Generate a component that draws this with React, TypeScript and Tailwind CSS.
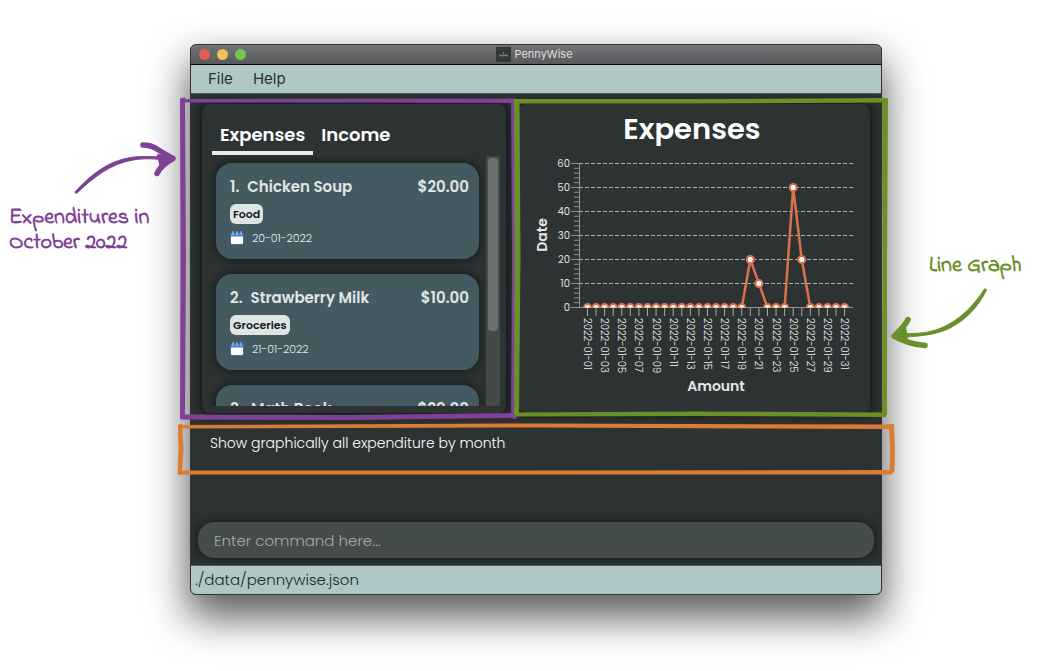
import React from "react";

type Expense = { id: number; name: string; amount: string; tag?: string; date?: string };

const expenses: Expense[] = [
  { id: 1, name: "Chicken Soup", amount: "$20.00", tag: "Food", date: "20-01-2022" },
  { id: 2, name: "Strawberry Milk", amount: "$10.00", tag: "Groceries", date: "21-01-2022" },
  { id: 3, name: "Math Book", amount: "$20.00" },
];

const daily: number[] = Array.from({ length: 31 }, (_, i) => {
  if (i === 19) return 20;
  if (i === 20) return 10;
  if (i === 24) return 50;
  if (i === 25) return 20;
  return 0;
});

function CalendarIcon() {
  return (
    <svg width="14" height="14" viewBox="0 0 14 14" aria-hidden="true">
      <rect x="0.5" y="1.800" width="13" height="11.700" rx="1.5" fill="#4a80d0" />
      <path d="M1 5.500h12v6.300a1.200 1.200 0 0 1-1.200 1.200H2.200A1.200 1.200 0 0 1 1 11.800z" fill="#fff" />
      <path d="M3 .8v2.600M7 .8v2.600M11 .8v2.600" stroke="#8fb8f2" strokeWidth="1.400" strokeLinecap="round" />
    </svg>
  );
}

function ExpenseCard({ item }: { item: Expense }) {
  return (
    <li className="h-24 shrink-0 rounded-2xl bg-[#455a60] pt-3 pr-2.5 pl-3.5 shadow-[0_0_8px_2px_rgba(0,0,0,0.45)]">
      <div className="flex gap-2 text-[15px] leading-[23px] font-semibold text-[#e0e7e7]">
        <span>{item.id}.</span>
        <span className="flex-1">{item.name}</span>
        <span>{item.amount}</span>
      </div>
      {item.tag && (
        <div className="mt-1.5 flex">
          <span className="rounded-md bg-[#dde6e5] px-[3px] text-[11px] leading-5 font-semibold text-[#151a1a]">
            {item.tag}
          </span>
        </div>
      )}
      {item.date && (
        <div className="mt-1.5 flex items-center gap-2 text-[11px] leading-4 font-light text-[#e6ebeb]">
          <CalendarIcon />
          <span>{item.date}</span>
        </div>
      )}
    </li>
  );
}

function ExpenseChart() {
  const x = (i: number) => 69.5 + i * 8.57;
  const y = (v: number) => 203.5 - v * 2.4;
  const points = daily.map((v, i) => `${x(i)},${y(v)}`).join(" ");
  return (
    <svg viewBox="0 0 352 308" className="block w-full" role="img" aria-label="Expenses line chart">
      <defs>
        <clipPath id="plot">
          <rect x="60" y="50" width="278" height="153.500" />
        </clipPath>
      </defs>
      <text x="174" y="35" textAnchor="middle" fontSize="29" fontWeight="600" fill="#fff">Expenses</text>
      {[0, 10, 20, 30, 40, 50, 60].map((v) => (
        <g key={v}>
          <text x="52" y={y(v) + 3.5} textAnchor="end" fontSize="10" fill="#dfe3e3">{v}</text>
          <path d={`M53 ${y(v)}h8`} stroke="#8f9494" />
          {v > 0 && <path d={`M61 ${y(v)}H336`} stroke="#a9adad" strokeDasharray="4 2" />}
        </g>
      ))}
      {Array.from({ length: 30 }, (_, i) => (
        <path key={i} d={`M56 ${y(i * 2)}h5`} stroke="#8f9494" />
      ))}
      <path d="M61.500 59V204M61 203.500H335" stroke="#8f9494" fill="none" />
      {daily.map((_, i) => (
        <path key={i} d={`M${x(i)} 204v8`} stroke="#a5a9a9" />
      ))}
      {daily.map((_, i) =>
        i % 2 === 0 ? (
          <text key={i} transform={`translate(${x(i) - 3.5} 214) rotate(90)`} fontSize="10" fontWeight="300" fill="#f0f3f3">
            {`2022-01-${String(i + 1).padStart(2, "0")}`}
          </text>
        ) : null,
      )}
      <g clipPath="url(#plot)">
        <polyline points={points} fill="none" stroke="#dc7150" strokeWidth="2.500" strokeLinejoin="round" />
        {daily.map((v, i) => (
          <circle key={i} cx={x(i)} cy={y(v)} r="3.500" fill="#fff" stroke="#dc7150" strokeWidth="2" />
        ))}
      </g>
      <text transform="translate(29 131) rotate(-90)" textAnchor="middle" fontSize="14" fontWeight="600" fill="#e4e8e8">Date</text>
      <text x="198" y="287" textAnchor="middle" fontSize="14" fontWeight="600" fill="#e4e8e8">Amount</text>
    </svg>
  );
}

export default function App() {
  return (
    <main className="grid min-h-screen grid-cols-[190px_minmax(0,1fr)_163px] items-start overflow-hidden bg-white font-['Poppins','Inter','Liberation_Sans',sans-serif]">
      <aside className="relative z-10 pt-[140px] pl-[9px] text-[#7f4196]">
        <svg width="170" height="60" viewBox="9 140 170 60" fill="currentColor" stroke="currentColor" strokeLinecap="round" strokeLinejoin="round" aria-hidden="true">
          <path d="M75 192C95 170 115 157 142 156.500L172 157V161C155 158 142 158.500 133 160C110 164 94 177 76.500 193.500Z" strokeWidth="1" />
          <path d="M143 145Q151 145 157 149T173 158.500Q161 165 157 173.500" fill="none" strokeWidth="5.500" />
          <path d="M158 155L174 159L161 168Z" strokeWidth="2" />
        </svg>
        <p className="mt-1.5 font-['Indie_Flower','Lato',sans-serif] text-[22px] leading-[25px] font-bold whitespace-nowrap">
          Expenditures in
          <br />
          October 2022
        </p>
      </aside>

      <section className="mt-11 rounded-md border border-[#303234] bg-[#2d3333] shadow-[0_20px_40px_2px_rgba(0,0,0,0.65)]">
        <header className="relative flex h-5 items-center justify-center gap-[3px] rounded-t-[5px] border-b border-black bg-linear-to-b from-[#737477] to-[#58595b] pr-[3px] font-['Inter',sans-serif] text-[11px] text-[#dedede]">
          <div className="absolute left-2 flex gap-[7px]">
            <span className="size-[11px] rounded-full bg-[#e25f57]" />
            <span className="size-[11px] rounded-full bg-[#f2bd5b]" />
            <span className="size-[11px] rounded-full bg-[#77c353]" />
          </div>
          <svg width="15" height="15" viewBox="0 0 15 15" aria-hidden="true">
            <rect width="15" height="15" fill="#343838" />
            <path d="M3 8.500h9M7.500 5v2" stroke="#777c7c" strokeWidth="1.300" />
          </svg>
          <h1>PennyWise</h1>
        </header>

        <nav className="flex h-[29px] items-center gap-5 border-b border-[#4e6064] bg-[#afc7c7] pl-[17px] font-['Inter',sans-serif] text-[15px] text-[#2a3030]">
          <button type="button">File</button>
          <button type="button">Help</button>
        </nav>

        <div className="grid grid-cols-[304fr_352fr] gap-3 px-[11px] pt-[10px]">
          <section className="relative h-[309px] rounded-lg shadow-[0_0_8px_3px_rgba(0,0,0,0.5)]">
            <div className="flex pt-[17px] pl-[10px] text-[18px] leading-[27px] font-semibold text-white" role="tablist">
              <button type="button" role="tab" aria-selected="true" className="border-b-4 border-[#e6efee] px-2 pb-[3px]">
                Expenses
              </button>
              <button type="button" role="tab" aria-selected="false" className="border-b-4 border-transparent px-2 pb-[3px]">
                Income
              </button>
            </div>
            <div className="mt-px mr-1.5 ml-1 flex h-[250px] overflow-hidden">
              <ul className="flex min-w-0 flex-1 flex-col gap-[15px] overflow-hidden pt-[7px] pr-[7px] pl-[10px]">
                {expenses.map((item) => (
                  <ExpenseCard key={item.id} item={item} />
                ))}
              </ul>
              <div className="w-3.5 bg-[#434a49] px-0.5 pt-0.5">
                <div className="h-[173px] rounded-sm bg-[#6a7271]" />
              </div>
            </div>
            <svg className="pointer-events-none absolute -top-[7px] -left-[22px] z-10 h-[323px] w-[calc(100%+33px)]" viewBox="0 0 337 323" preserveAspectRatio="none" fill="#7f4196" aria-hidden="true">
              <path d="M0 1.500L5 0L6 160L5 321L0 322L0.500 160Z" />
              <path d="M2 2L170 1.500L335 1.500L335 6L170 5.500L2 5.500Z" />
              <path d="M331 2L335.500 2L336.500 160L336 322L331 321L332 160Z" />
              <path d="M1 317.500L170 318L336 316L337 321L170 323L1 322.500Z" />
            </svg>
          </section>

          <section className="relative rounded-lg shadow-[0_0_8px_3px_rgba(0,0,0,0.5)]">
            <div className="rounded-lg bg-[#2d3333]">
              <ExpenseChart />
            </div>
            <svg className="pointer-events-none absolute -top-[7px] -left-1 z-10 h-[320px] w-[calc(100%+22px)]" viewBox="0 0 374 320" preserveAspectRatio="none" fill="#6a9029" aria-hidden="true">
              <path d="M0 2L5.500 3L6.500 160L5 319L0 318L0.500 160Z" />
              <path d="M1 2L180 2L373 1L373 5.500L180 6.500L1 6.500Z" />
              <path d="M368 1L374 1L373 160L373 318L368 319L368.500 160Z" />
              <path d="M1 315.500L180 314.500L372 315.500L372 320L180 319L1 319.500Z" />
            </svg>
          </section>
        </div>

        <section className="relative mt-2.5 h-[52px] pt-[10px] pl-[19px]">
          <p className="text-[14px] leading-5 font-light text-white">Show graphically all expenditure by month</p>
          <svg className="pointer-events-none absolute top-0 -left-[14px] z-10 h-[52px] w-[calc(100%+28px)]" viewBox="0 0 718 52" preserveAspectRatio="none" fill="#db7c32" aria-hidden="true">
            <path d="M1 1.500L5 1L6.500 26L5 51.500L0.500 52L1.500 26Z" />
            <path d="M1 2L360 0.500L716 1.500L716 6L360 4.500L1 5.500Z" />
            <path d="M712 1L717 1L718 26L717.500 49L712.500 50L713 26Z" />
            <path d="M1 47.500L360 47.500L717 47L715 51.500L360 51.500L1 51.500Z" />
          </svg>
        </section>

        <div className="mt-[47px] px-[7px] pb-[7px]">
          <label htmlFor="command" className="sr-only">Command</label>
          <input
            id="command"
            type="text"
            placeholder="Enter command here..."
            className="block h-9 w-full rounded-2xl bg-[#454d4c] px-4 text-[15px] font-light text-white shadow-[0_0_8px_2px_rgba(0,0,0,0.4)] outline-none placeholder:text-[#a6aaaa]"
          />
        </div>

        <footer className="h-[29px] rounded-b-[5px] border-t border-[#4e6064] bg-[#afc7c7] pl-1 text-[15px] leading-[27px] font-light text-[#1d2628]">
          ./data/pennywise.json
        </footer>
      </section>

      <aside className="relative z-10 pt-[254px] text-[#6a9029]">
        <p className="pl-[47px] font-['Indie_Flower','Lato',sans-serif] text-[22px] leading-[25px] font-bold whitespace-nowrap">Line Graph</p>
        <svg width="120" height="72" viewBox="882 280 120 72" fill="currentColor" stroke="currentColor" strokeLinecap="round" strokeLinejoin="round" aria-hidden="true">
          <path d="M984.500 290C968 316 948 328 932 332C920 335 910 334.500 896 335V338C925 338 940 334 950 329C967 320 978 308 986.500 291Z" strokeWidth="1" />
          <path d="M908 320.500Q905 327 894 337Q908 345 925 346.500" fill="none" strokeWidth="5.500" />
          <path d="M905 328L894 337L907 341Z" strokeWidth="2" />
        </svg>
      </aside>
    </main>
  );
}
